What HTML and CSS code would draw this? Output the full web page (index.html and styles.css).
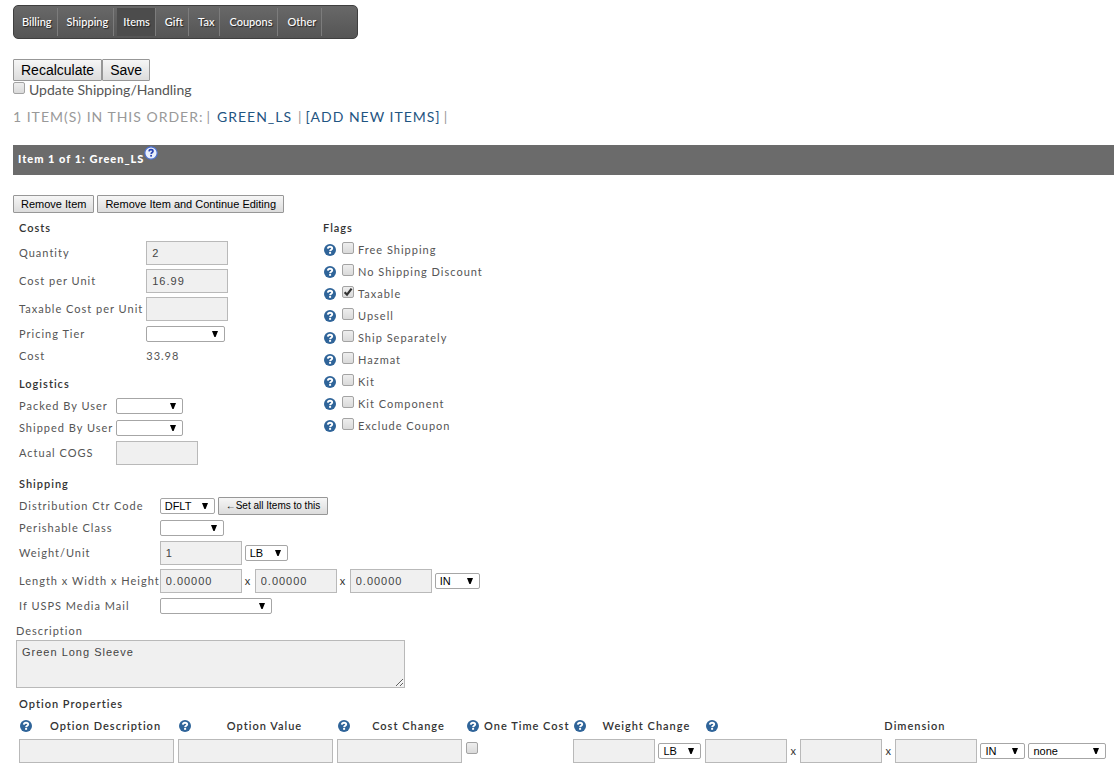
FILE: index.html
```html
<!DOCTYPE html>
<html lang="en">
<head>
  <meta charset="UTF-8">
  <meta name="viewport" content="width=device-width, initial-scale=1.0">
  <title>Edit Order Items</title>
  <link rel="stylesheet" href="styles.css">
</head>
<body>
  <svg class="symbols" aria-hidden="true">
    <symbol id="help" viewBox="0 0 12 12">
      <circle cx="6" cy="6" r="6" fill="#2f6499"/>
      <path d="M3.8 4.6C4 3.3 4.9 2.7 6 2.7c1.2 0 2.2.7 2.2 1.7 0 1.3-2 1.3-2.1 2.7" fill="none" stroke="#fff" stroke-width="1.9"/>
      <rect x="5.1" y="7.9" width="2" height="1.9" fill="#fff"/>
    </symbol>
    <symbol id="help-light" viewBox="0 0 14 14">
      <circle cx="7" cy="7" r="6.2" fill="#e9effc" stroke="#4a6fd0" stroke-width="1.2"/>
      <path d="M5 5.4C5.1 4.2 6 3.7 7 3.7c1.1 0 2 .6 2 1.6 0 1.2-1.8 1.2-1.9 2.6" fill="none" stroke="#2743b5" stroke-width="1.7"/>
      <rect x="6.2" y="8.9" width="1.8" height="1.7" fill="#2743b5"/>
    </symbol>
  </svg>

  <nav class="tabs">
    <a href="#">Billing</a>
    <a href="#">Shipping</a>
    <a href="#" class="active">Items</a>
    <a href="#">Gift</a>
    <a href="#">Tax</a>
    <a href="#">Coupons</a>
    <a href="#">Other</a>
  </nav>

  <form>
    <div class="actions">
      <button type="button" class="btn btn-large">Recalculate</button><button type="button" class="btn btn-large">Save</button>
    </div>
    <div class="update">
      <input type="checkbox" id="updateShipping">
      <label for="updateShipping">Update Shipping/Handling</label>
    </div>

    <div class="order-items">
      <span>1 ITEM(S) IN THIS ORDER:</span>
      <span>|</span>
      <a href="#" class="item-link">GREEN_LS</a>
      <span>|</span>
      <a href="#">[ADD NEW ITEMS]</a>
      <span>|</span>
    </div>

    <h2 class="item-bar">Item 1 of 1: Green_LS<svg class="help-light"><use href="#help-light"/></svg></h2>

    <div class="item-actions">
      <button type="button" class="btn">Remove Item</button>
      <button type="button" class="btn">Remove Item and Continue Editing</button>
    </div>

    <div class="columns">
      <div class="left">
        <h3>Costs</h3>
        <div class="fields">
          <label for="quantity">Quantity</label>
          <input type="text" id="quantity" value="2">
          <label for="unitCost">Cost per Unit</label>
          <input type="text" id="unitCost" value="16.99">
          <label for="taxableCost">Taxable Cost per Unit</label>
          <input type="text" id="taxableCost">
          <label for="tier">Pricing Tier</label>
          <select id="tier" class="w-tier"><option></option></select>
          <span>Cost</span>
          <span>33.98</span>
        </div>

        <h3>Logistics</h3>
        <div class="fields">
          <label for="packedBy">Packed By User</label>
          <select id="packedBy" class="w-user"><option></option></select>
          <label for="shippedBy">Shipped By User</label>
          <select id="shippedBy" class="w-user"><option></option></select>
          <label for="cogs">Actual COGS</label>
          <input type="text" id="cogs">
        </div>
      </div>

      <div class="flags">
        <h3>Flags</h3>
        <div class="flag"><svg class="help"><use href="#help"/></svg><input type="checkbox" id="freeShipping"><label for="freeShipping">Free Shipping</label></div>
        <div class="flag"><svg class="help"><use href="#help"/></svg><input type="checkbox" id="noDiscount"><label for="noDiscount">No Shipping Discount</label></div>
        <div class="flag"><svg class="help"><use href="#help"/></svg><input type="checkbox" id="taxable" checked><label for="taxable">Taxable</label></div>
        <div class="flag"><svg class="help"><use href="#help"/></svg><input type="checkbox" id="upsell"><label for="upsell">Upsell</label></div>
        <div class="flag"><svg class="help"><use href="#help"/></svg><input type="checkbox" id="shipSeparately"><label for="shipSeparately">Ship Separately</label></div>
        <div class="flag"><svg class="help"><use href="#help"/></svg><input type="checkbox" id="hazmat"><label for="hazmat">Hazmat</label></div>
        <div class="flag"><svg class="help"><use href="#help"/></svg><input type="checkbox" id="kit"><label for="kit">Kit</label></div>
        <div class="flag"><svg class="help"><use href="#help"/></svg><input type="checkbox" id="kitComponent"><label for="kitComponent">Kit Component</label></div>
        <div class="flag"><svg class="help"><use href="#help"/></svg><input type="checkbox" id="excludeCoupon"><label for="excludeCoupon">Exclude Coupon</label></div>
      </div>
    </div>

    <div class="shipping">
      <h3>Shipping</h3>
      <div class="fields">
        <label for="distCode">Distribution Ctr Code</label>
        <div class="group">
          <select id="distCode" class="w-code"><option>DFLT</option></select>
          <button type="button" class="btn btn-small">←Set all Items to this</button>
        </div>
        <label for="perishable">Perishable Class</label>
        <select id="perishable" class="w-class"><option></option></select>
        <label for="weight">Weight/Unit</label>
        <div class="group">
          <input type="text" id="weight" value="1">
          <select class="w-unit" aria-label="Weight unit"><option>LB</option></select>
        </div>
        <label for="length">Length x Width x Height</label>
        <div class="group">
          <input type="text" id="length" value="0.00000">
          <span class="times">x</span>
          <input type="text" value="0.00000" aria-label="Width">
          <span class="times">x</span>
          <input type="text" value="0.00000" aria-label="Height">
          <select class="w-dim" aria-label="Dimension unit"><option>IN</option></select>
        </div>
        <label for="mediaMail">If USPS Media Mail</label>
        <select id="mediaMail" class="w-mail"><option></option></select>
      </div>
    </div>

    <div class="description">
      <label for="description">Description</label>
      <textarea id="description">Green Long Sleeve</textarea>
    </div>

    <div class="options">
      <h3>Option Properties</h3>
      <table>
        <tr>
          <th><div class="head"><svg class="help"><use href="#help"/></svg><span>Option Description</span></div></th>
          <th><div class="head"><svg class="help"><use href="#help"/></svg><span>Option Value</span></div></th>
          <th><div class="head"><svg class="help"><use href="#help"/></svg><span>Cost Change</span></div></th>
          <th><div class="head"><svg class="help"><use href="#help"/></svg><span>One Time Cost</span></div></th>
          <th><div class="head"><svg class="help"><use href="#help"/></svg><span>Weight Change</span></div></th>
          <th><div class="head"><svg class="help"><use href="#help"/></svg><span>Dimension</span></div></th>
        </tr>
        <tr>
          <td><div class="group"><input type="text" class="w-option" aria-label="Option Description"></div></td>
          <td><div class="group"><input type="text" class="w-option" aria-label="Option Value"></div></td>
          <td><div class="group"><input type="text" class="w-change" aria-label="Cost Change"></div></td>
          <td><div class="group"><input type="checkbox" aria-label="One Time Cost"></div></td>
          <td>
            <div class="group">
              <input type="text" aria-label="Weight Change">
              <select class="w-unit" aria-label="Weight unit"><option>LB</option></select>
            </div>
          </td>
          <td>
            <div class="group">
              <input type="text" aria-label="Length">
              <span class="times">x</span>
              <input type="text" aria-label="Width">
              <span class="times">x</span>
              <input type="text" aria-label="Height">
              <select class="w-dim" aria-label="Dimension unit"><option>IN</option></select>
              <select class="w-none" aria-label="Dimension change"><option>none</option></select>
            </div>
          </td>
        </tr>
      </table>
    </div>
  </form>
</body>
</html>
```
FILE: styles.css
```css
* {
  box-sizing: border-box;
}
body {
  margin: 5px 0 0 13px;
  background: #fff;
  color: #555;
  font-family: Lato, sans-serif;
  font-size: 11px;
  line-height: 18px;
  letter-spacing: 1px;
}
a {
  color: #1f5582;
  text-decoration: none;
}
.symbols {
  display: none;
}

/* top tabs */
.tabs {
  display: flex;
  gap: 3px;
  width: 345px;
  height: 34px;
  padding: 2px 0 2px 2px;
  border: 1px solid #3f3f3f;
  border-radius: 5px;
  background: linear-gradient(#686868, #555);
  letter-spacing: 0;
}
.tabs a {
  padding: 0 5px 0 6px;
  border-right: 1px solid #7c7c7c;
  color: #fff;
  font-weight: 500;
  line-height: 28px;
  text-shadow: 1px 1px 1px #222;
}
.tabs a.active {
  background: #4c4c4c;
}

/* buttons */
.btn {
  height: 18px;
  padding: 0 7px;
  border: 1px solid #979797;
  border-radius: 1px;
  background: linear-gradient(#f6f6f6, #dcdcdc);
  color: #000;
  font-family: "Liberation Sans", Arial, sans-serif;
  font-size: 11px;
  line-height: 16px;
}
.btn-large {
  height: 22px;
  font-size: 14px;
  line-height: 20px;
}
.btn-small {
  font-size: 10px;
}
.actions {
  display: flex;
  margin-top: 20px;
}
.item-actions {
  display: flex;
  gap: 3px;
  margin-top: 20px;
}

/* form controls */
input[type="text"], textarea {
  width: 82px;
  height: 24px;
  margin: 0;
  padding: 0 5px;
  border: 1px solid #b9b9b9;
  background: #f0f0f0;
  color: #444;
  font-family: "Liberation Sans", Arial, sans-serif;
  font-size: 11px;
  letter-spacing: 1px;
}
input[type="checkbox"] {
  appearance: none;
  flex: none;
  width: 12px;
  height: 12px;
  margin: 0;
  border: 1px solid #a3a3a3;
  border-radius: 2px;
  background: linear-gradient(#eee, #dadada);
}
input[type="checkbox"]:checked {
  background: url("data:image/svg+xml,%3Csvg xmlns='http://www.w3.org/2000/svg' viewBox='0 0 10 10'%3E%3Cpath d='M1.6 5.2 4 7.6 8.6 1.6' fill='none' stroke='%23333' stroke-width='2.2'/%3E%3C/svg%3E") center / 10px 10px no-repeat, linear-gradient(#eee, #dadada);
}
select {
  appearance: none;
  height: 16px;
  margin: 0;
  padding: 0 4px;
  border: 1px solid #a6a6a6;
  border-radius: 2px;
  background: #fff url("data:image/svg+xml,%3Csvg xmlns='http://www.w3.org/2000/svg' viewBox='0 0 6 6'%3E%3Cpath d='M0 0h6L3.6 6H2.4z'/%3E%3C/svg%3E") right 6px center / 6px 6px no-repeat;
  color: #000;
  font-family: "Liberation Sans", Arial, sans-serif;
  font-size: 11px;
  line-height: 14px;
}
.w-tier {
  width: 79px;
}
.w-user {
  width: 67px;
}
.w-code {
  width: 55px;
}
.w-class {
  width: 64px;
}
.w-unit {
  width: 43px;
}
.w-dim {
  width: 45px;
}
.w-mail {
  width: 112px;
}
.w-none {
  width: 78px;
}
input.w-option {
  width: 155px;
}
input.w-change {
  width: 125px;
}
.help {
  flex: none;
  width: 12px;
  height: 12px;
  margin-bottom: 1px;
}

/* order summary */
.update {
  display: flex;
  gap: 4px;
  font-size: 14px;
  letter-spacing: 0;
}
.update input[type="checkbox"] {
  margin-top: 1px;
}
.order-items {
  display: flex;
  gap: 3px;
  margin-top: 9px;
  color: #999;
  font-size: 14px;
}
.order-items .item-link {
  margin: 0 3px;
}
.item-bar {
  display: flex;
  align-items: flex-start;
  height: 30px;
  margin: 19px 0 0;
  padding: 0 5px;
  background: #6b6b6b;
  color: #fff;
  font-size: 11px;
  font-weight: 900;
  line-height: 28px;
}
.help-light {
  width: 14px;
  height: 14px;
  margin-top: 1px;
}

/* item details */
h3 {
  margin: 0 0 4px;
  color: #333;
  font-size: 11px;
  font-weight: 600;
}
.columns {
  display: flex;
  margin-top: 6px;
  padding-left: 6px;
}
.left {
  width: 304px;
}
.fields {
  display: grid;
  grid-template-columns: max-content 1fr;
  grid-auto-rows: minmax(18px, auto);
  gap: 4px 3px;
  align-items: center;
  justify-items: start;
}
.fields + h3 {
  margin-top: 10px;
}
.group {
  display: flex;
  align-items: center;
  gap: 3px;
}
.times {
  width: 7px;
  color: #333;
}
.flag {
  display: flex;
  align-items: center;
  margin: 0 0 4px 1px;
}
.flag input[type="checkbox"] {
  margin: 0 4px 5px 6px;
}
.shipping {
  margin-top: 10px;
  padding-left: 6px;
}
.shipping .fields {
  column-gap: 0;
}
.description {
  margin: 7px 0 0 3px;
}
.description label, .description textarea {
  display: block;
}
.description textarea {
  width: 389px;
  height: 48px;
  padding: 5px;
}
.options {
  margin-top: 7px;
  padding-left: 6px;
}
.options h3 {
  margin: 0;
}
table {
  border-spacing: 0;
}
th, td {
  padding: 4px 4px 0 0;
}
th {
  color: #333;
  font-weight: 600;
}
.head {
  display: flex;
  align-items: center;
  padding-left: 1px;
}
.head span {
  flex: 1;
  padding-left: 5px;
  white-space: nowrap;
}
td input[type="checkbox"] {
  margin-bottom: 6px;
}
```
